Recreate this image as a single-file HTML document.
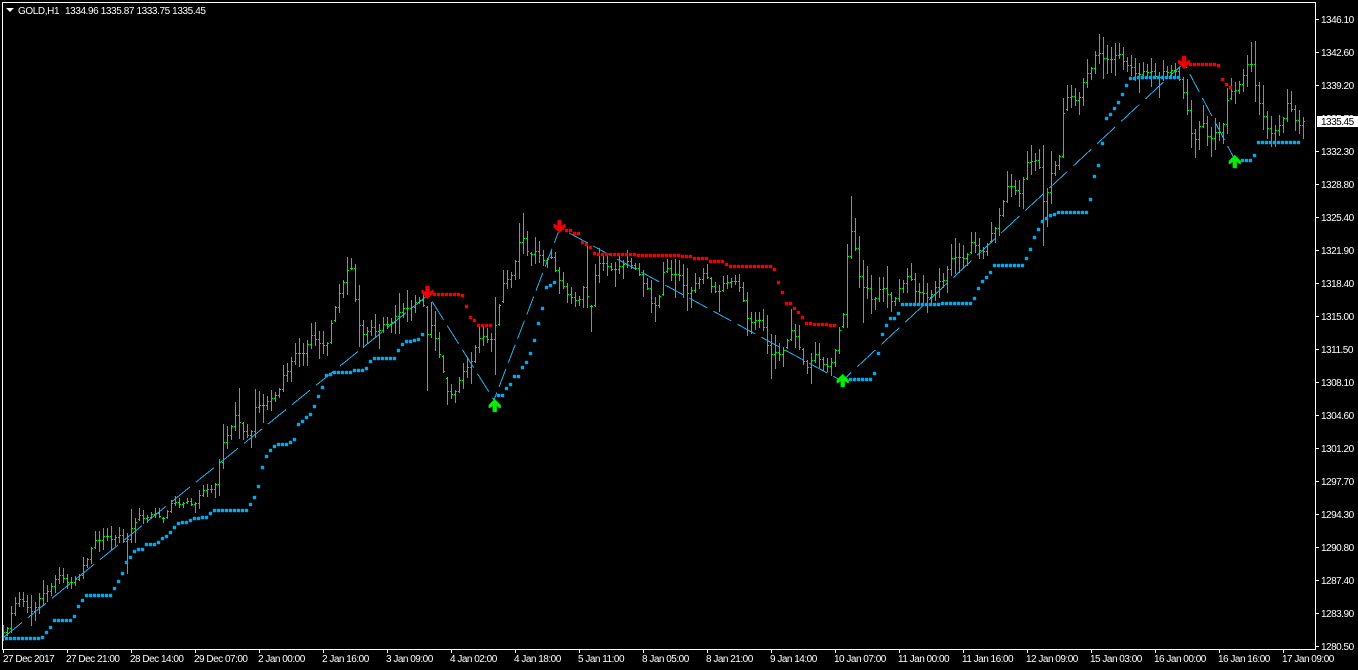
<!DOCTYPE html>
<html>
<head>
<meta charset="utf-8">
<title>GOLD,H1</title>
<style>
html,body{margin:0;padding:0;background:#000;width:1358px;height:670px;overflow:hidden}
svg{display:block}
text{font-family:"Liberation Sans",sans-serif;font-size:10px;letter-spacing:-0.5px;fill:#fff}
</style>
</head>
<body>
<svg id="c" xmlns="http://www.w3.org/2000/svg" width="1358" height="670" viewBox="0 0 1358 670">
<g id="bars" shape-rendering="crispEdges" fill="#00ee00"></g>
<g id="zig" fill="none" stroke="#1fb4ee" stroke-width="1" shape-rendering="crispEdges"></g>
<g id="dots"></g>
<defs><path id="ar" d="M-2 0h4v6l3-2h1v3l-6 6-6-6v-3h1l3 2z"/></defs>
<g id="arrows" stroke-width="0.5">
<use href="#ar" transform="translate(427.5,286)" fill="#f00000" stroke="#b80000"/>
<use href="#ar" transform="translate(559.5,220)" fill="#f00000" stroke="#b80000"/>
<use href="#ar" transform="translate(1184,56)" fill="#f00000" stroke="#b80000"/>
<use href="#ar" transform="translate(494.7,412) scale(1,-1)" fill="#00f000" stroke="#00b800"/>
<use href="#ar" transform="translate(842.7,387) scale(1,-1)" fill="#00f000" stroke="#00b800"/>
<use href="#ar" transform="translate(1234.8,168) scale(1,-1)" fill="#00f000" stroke="#00b800"/>
</g>
<g shape-rendering="crispEdges" stroke="#fff" fill="none">
<path d="M2.5 2V650M2 2.5H1316M1315.5 2V650M2 649.5H1316"/>
<path d="M3.5 650v3M67.5 650v3M131.5 650v3M195.5 650v3M259.5 650v3M323.5 650v3M387.5 650v3M451.5 650v3M515.5 650v3M579.5 650v3M643.5 650v3M707.5 650v3M771.5 650v3M835.5 650v3M899.5 650v3M963.5 650v3M1027.5 650v3M1091.5 650v3M1155.5 650v3M1219.5 650v3M1283.5 650v3"/>
<path d="M1316 19.5h3M1316 52.5h3M1316 85.5h3M1316 151.5h3M1316 184.5h3M1316 217.5h3M1316 250.5h3M1316 283.5h3M1316 316.5h3M1316 349.5h3M1316 382.5h3M1316 415.5h3M1316 448.5h3M1316 481.5h3M1316 514.5h3M1316 547.5h3M1316 580.5h3M1316 613.5h3M1316 646.5h3"/>
</g>
<path d="M6 8h8l-4 4z" fill="#fff"/>
<text x="18" y="14" style="letter-spacing:-0.4px">GOLD,H1</text>
<text x="65" y="14" style="letter-spacing:-0.4px">1334.96 1335.87 1333.75 1335.45</text>
<g>
<text x="1321" y="23">1346.10</text>
<text x="1321" y="56">1342.60</text>
<text x="1321" y="89">1339.20</text>
<text x="1321" y="122">1335.70</text>
<text x="1321" y="155">1332.30</text>
<text x="1321" y="188">1328.80</text>
<text x="1321" y="221">1325.40</text>
<text x="1321" y="254">1321.90</text>
<text x="1321" y="287">1318.40</text>
<text x="1321" y="320">1315.00</text>
<text x="1321" y="353">1311.50</text>
<text x="1321" y="386">1308.10</text>
<text x="1321" y="419">1304.60</text>
<text x="1321" y="452">1301.20</text>
<text x="1321" y="485">1297.70</text>
<text x="1321" y="518">1294.30</text>
<text x="1321" y="551">1290.80</text>
<text x="1321" y="584">1287.40</text>
<text x="1321" y="617">1283.90</text>
<text x="1321" y="650">1280.50</text>
</g>
<rect x="1317" y="116" width="41" height="11" fill="#fff" shape-rendering="crispEdges"/>
<text x="1321" y="125" style="fill:#000">1335.45</text>
<g>
<text x="3" y="662">27 Dec 2017</text>
<text x="66" y="662">27 Dec 21:00</text>
<text x="130" y="662">28 Dec 14:00</text>
<text x="194" y="662">29 Dec 07:00</text>
<text x="258" y="662">2 Jan 00:00</text>
<text x="322" y="662">2 Jan 16:00</text>
<text x="386" y="662">3 Jan 09:00</text>
<text x="450" y="662">4 Jan 02:00</text>
<text x="514" y="662">4 Jan 18:00</text>
<text x="578" y="662">5 Jan 11:00</text>
<text x="642" y="662">8 Jan 05:00</text>
<text x="706" y="662">8 Jan 21:00</text>
<text x="770" y="662">9 Jan 14:00</text>
<text x="834" y="662">10 Jan 07:00</text>
<text x="898" y="662">11 Jan 00:00</text>
<text x="962" y="662">11 Jan 16:00</text>
<text x="1026" y="662">12 Jan 09:00</text>
<text x="1090" y="662">15 Jan 03:00</text>
<text x="1154" y="662">16 Jan 00:00</text>
<text x="1218" y="662">16 Jan 16:00</text>
<text x="1282" y="662">17 Jan 09:00</text>
</g>
</svg>
<script>
(function(){
var NS="http://www.w3.org/2000/svg";
var chunks=[
[3,[625,640,627,635,606,632,597,615,592,606,592,606,595,612,595,625,602,620,593,613,580,605,585,601,583,595,575,592,567,583,568,582,574,588,577,588,576,585,574,580,557,578,558,567,547,563,531,548,531,551,528,549,528,540,526,549,535,545,527,542,529,542,533,573,509,542,518,542,508,520,510,523,515,522,512,518,508,517,508,517,517,522,510,518,500,512,496,505,498,507,502,507,498,503,498,505,502,512,490,508,485,496,484,496,485,492,483,497]],
[219,[459,495,424,468,426,448,425,439,402,430,388,438,422,439,424,437,430,447,389,437,391,412,394,422,396,409,390,410,392,401,388,397,365,391,363,381,357,381,343,364,338,366,343,365,340,365,323,348,322,345,331,358,331,353,342,355,320,343,306,321,284,312]],
[343,[280,297,257,294,258,269,264,301,285,346,320,347,327,343,320,335,314,337,324,348,317,332,317,328,318,332,305,333,293,333,303,317,290,321,300,320,295,312,297,303,295,306,306,390,302,337,311,350,332,357,355,372,377,404,384,398,390,402,377,392,363,388,357,377,352,383,345,362,327,352,327,345,328,342,333,351,297,374,304,325,270,302,270,288,272,287,260,279,223,278,213,253,231,255,252,265,237,263,241,262,250,265,258,267,250,258,252,271,267,293,272,288,283,302,287,303,292,306,296,305,286,307,242,307,305,331,264,306,248,282,253,270,255,275,263,270,262,286,253,273,260,278,250,267,258,268,263,269,263,275,270,296,278,289,280,312,297,321,295,307,262,295,259,272,260,280,259,297,260,280]],
[683,[264,297,268,310,287,307,273,292,277,288,268,283,264,278,277,292,282,292,285,311,276,291,275,288,278,287,275,284,274,291,282,301,292,335,312,333,312,329,312,327,309,330,315,353,334,378,335,368,343,360,347,366,339,348,309,340,324,347,325,349,348,364,360,373,353,383,342,362,343,367,357,370,358,371,358,375,349,366,327,353,313,327,244,327,196,258,218,250,236,287,260,322,266,298,275,313,297,309,277,301,277,301,266,307,292,311,297,305,279,301,280,292,268,292,263,280,273,303,283,305,275,303,283,312,290,303,281,300,268,297,273,287,266,292,244,275,238,273,243,272,245,267,253,265,232,253,232,252,238,258,247,258,243,255,222,242,227,242,208,235]],
[1003,[200,216,171,202,174,196,180,194,180,206,177,208,151,179,145,174,153,170,149,168,145,245,188,226,151,203,161,175,155,169,98,157]],
[1067,[85,110,85,107,88,105,92,114,78,105,59,87,67,79,51,73,34,63,37,78,45,73,47,72,43,75,43,58,47,69,57,71,55,75,58,80,63,92,62,78,64,78,58,86,63,77,72,97,60,80,66,78,65,77,63,75,67,80,77,98,79,114]],
[1191,[100,147,129,157,121,149,105,127,116,145,127,156,118,149,122,140,123,143,88,133,78,99,82,103,81,93,69,91,55,86,42,71,41,101,82,114,85,129,111,138,116,146,125,146,115,135,117,132,89,121,91,111,105,130,110,133,117,138]]
];
var b=[];
chunks.forEach(function(c){for(var i=0;i<c[1].length;i+=2){b.push([c[0]+i*2,c[1][i],c[1][i+1]]);}});
var prev=null;
var g=document.getElementById("bars");
function clamp(v,a,z){return Math.max(a,Math.min(z,v));}
function rect(parent,x,y,w,h,fill){
  var e=document.createElementNS(NS,"rect");
  e.setAttribute("x",x);e.setAttribute("y",y);e.setAttribute("width",w);e.setAttribute("height",h);
  if(fill)e.setAttribute("fill",fill);
  parent.appendChild(e);
}
b.forEach(function(r,i){
  var m=(r[1]+r[2])/2,n=b[i+1]?(b[i+1][1]+b[i+1][2])/2:121;
  var c=i==b.length-1?121:Math.round(clamp((m+n)/2,r[1]+1,r[2]-1));
  var o=prev===null?Math.round(m):Math.round(clamp(prev,r[1]+1,r[2]-1));
  rect(g,r[0],r[1],1,r[2]-r[1]+1);
  rect(g,r[0]-1,o,1,1);
  rect(g,r[0]+1,c,1,1);
  prev=c;
});

var segs=[
[4,637,428,295,0],
[428,295,494,400,17.3],
[494,400,560,228,10.7],
[560,228,842,381,14.7],
[842,381,1184,63,8.7],
[1184,63,1235,160,13]
];
var z=document.getElementById("zig");
segs.forEach(function(s){
  var l=document.createElementNS(NS,"path");
  l.setAttribute("d","M"+s[0]+" "+s[1]+"L"+s[2]+" "+s[3]);
  var dx=Math.abs(s[2]-s[0]),dy=Math.abs(s[3]-s[1]);
  l.setAttribute("pathLength",Math.max(dx,dy));
  l.setAttribute("stroke-dasharray","18 6");
  l.setAttribute("stroke-dashoffset",s[4]);
  z.appendChild(l);
});

var runs=[
["#00a8f0",6,"638*9,637,632,627,620*5,616,606,600,595*7,588,581,573,562,557,551,549*2,544*3,542,538,536,532,527,523,522*2,520,518*2,517*2,513,510*9,504,497,486"],
["#00a8f0",262,"467,456,450,446,444*3,442,439,424,421,417,414,406,396,387,375,374,372*5,370*3,368,361,358*6,350,344,341*2,340,339,334"],
["#00a8f0",498,"395*2,388,384,376*2,367,362,353,340,323,308,287,285,282"],
["#00a8f0",850,"379*6,373,353,334,325,318*2,313,304*10,303*8,298,288,281,277,272,265*8,258,249,237,229,221,218,215,214,212*8,199,176,165,143,118,114,108,102,94,85,78*2,77*11"],
["#00a8f0",1242,"160*3,155,142*11"],
["#f00000",434,"294*7,295,306,317,320,325*4"],
["#f00000",566,"230*2,233*2,242,244,247,253,254*10,255*11,256*3,258*4,261*4,264,266*11,269,282,292,303*2,308,312,317,323*2,324*4,325*2"],
["#f00000",1190,"64*7,65,79,84,87"]
];
var dg=document.getElementById("dots");
runs.forEach(function(r){
  var x=r[1],col=r[0];
  r[2].split(",").forEach(function(tok){
    var q=tok.split("*"),y=+q[0],n=q[1]?+q[1]:1;
    for(var i=0;i<n;i++){
      var e=document.createElementNS(NS,"rect");
      e.setAttribute("x",x-1.2);e.setAttribute("y",y-1.2);
      e.setAttribute("width","3.4");e.setAttribute("height","3.4");e.setAttribute("rx","0.8");
      e.setAttribute("fill",col);
      dg.appendChild(e);
      x+=4;
    }
  });
});
})();
</script>
</body>
</html>
